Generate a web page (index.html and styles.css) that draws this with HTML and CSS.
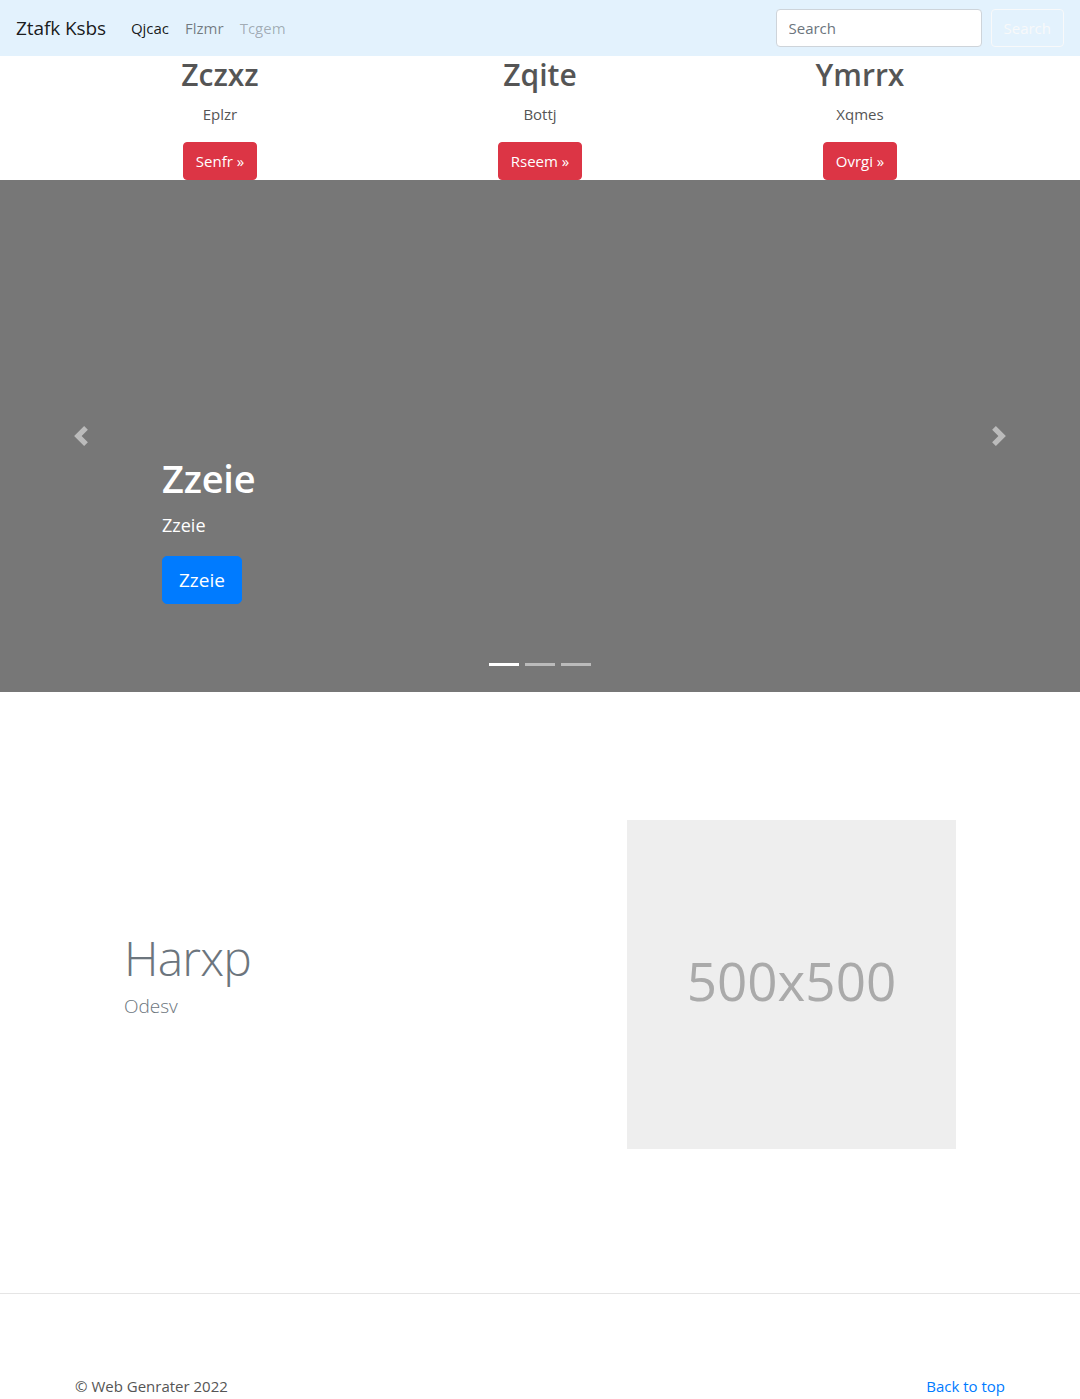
FILE: index.html
```html
<!DOCTYPE html>
<html lang="en">
<head>
<meta charset="utf-8">
<title>Ztafk Ksbs</title>
<link rel="stylesheet" href="styles.css">
</head>
<body>
<nav class="navbar">
  <a class="brand" href="#">Ztafk Ksbs</a>
  <ul class="nav">
    <li><a class="nav-link active" href="#">Qjcac</a></li>
    <li><a class="nav-link" href="#">Flzmr</a></li>
    <li><a class="nav-link disabled" href="#">Tcgem</a></li>
  </ul>
  <form class="search">
    <input class="search-input" type="text" placeholder="Search">
    <button class="search-btn" type="button">Search</button>
  </form>
</nav>

<section class="features">
  <div class="feature">
    <h2 class="feature-title">Zczxz</h2>
    <p class="feature-text">Eplzr</p>
    <a class="btn-danger" href="#">Senfr &raquo;</a>
  </div>
  <div class="feature">
    <h2 class="feature-title">Zqite</h2>
    <p class="feature-text">Bottj</p>
    <a class="btn-danger" href="#">Rseem &raquo;</a>
  </div>
  <div class="feature">
    <h2 class="feature-title">Ymrrx</h2>
    <p class="feature-text">Xqmes</p>
    <a class="btn-danger" href="#">Ovrgi &raquo;</a>
  </div>
</section>

<div class="carousel">
  <a class="carousel-control prev" href="#">
    <svg class="control-icon" viewBox="0 0 8 8" width="20" height="20"><path d="M5.25 0l-4 4 4 4 1.5-1.5L4.25 4l2.5-2.5L5.25 0z" fill="#fff"/></svg>
  </a>
  <a class="carousel-control next" href="#">
    <svg class="control-icon" viewBox="0 0 8 8" width="20" height="20"><path d="M2.75 0l-1.5 1.5L3.75 4l-2.5 2.5L2.75 8l4-4-4-4z" fill="#fff"/></svg>
  </a>
  <div class="carousel-caption">
    <h1 class="caption-title">Zzeie</h1>
    <p class="caption-lead">Zzeie</p>
    <p class="caption-action"><a class="btn-primary-lg" href="#">Zzeie</a></p>
  </div>
  <ol class="indicators">
    <li class="indicator active"></li>
    <li class="indicator"></li>
    <li class="indicator"></li>
  </ol>
</div>

<section class="featurette">
  <div class="featurette-text">
    <h2 class="featurette-heading">Harxp</h2>
    <p class="featurette-lead">Odesv</p>
  </div>
  <svg class="placeholder" width="329" height="329" viewBox="0 0 329 329">
    <rect width="329" height="329" fill="#eee"/>
    <text x="50%" y="50%" dy="0.31em" text-anchor="middle" fill="#aaa" class="placeholder-text">500x500</text>
  </svg>
</section>

<hr class="divider">

<footer class="footer">
  <p class="copy">&copy; Web Genrater 2022</p>
  <a class="back-top" href="#">Back to top</a>
</footer>
</body>
</html>
```

FILE: styles.css
```css
* { box-sizing: border-box; }

body {
  margin: 0;
  font-family: "Open Sans", "Noto Sans", sans-serif;
  font-size: 16px;
  line-height: 1.5;
  color: #555;
  background: #fff;
}

a { text-decoration: none; }

/* Navbar */
.navbar {
  display: flex;
  align-items: center;
  height: 56px;
  padding: 0 16px;
  background: #e3f2fd;
}

.brand {
  font-size: 19px;
  line-height: 30px;
  color: rgba(0, 0, 0, 0.9);
  margin-right: 17px;
  letter-spacing: -0.1px;
}

.nav {
  display: flex;
  list-style: none;
  margin: 0;
  padding: 0;
  flex: 1;
}

.nav-link {
  display: block;
  padding: 8px 8px;
  font-size: 15px;
  color: rgba(0, 0, 0, 0.5);
}

.nav-link.active { color: rgba(0, 0, 0, 0.9); }
.nav-link.disabled { color: rgba(0, 0, 0, 0.3); }

.search {
  display: flex;
  align-items: center;
}

.search-input {
  width: 206px;
  height: 38px;
  padding: 6px 12px;
  font-family: inherit;
  font-size: 15px;
  color: #495057;
  background: #fff;
  border: 1px solid #ced4da;
  border-radius: 4px;
  margin-right: 9px;
}

.search-input::placeholder { color: #6c757d; }

.search-btn {
  height: 38px;
  padding: 6px 12px;
  font-family: inherit;
  font-size: 15px;
  color: #f8f9fa;
  background: transparent;
  border: 1px solid #f8f9fa;
  border-radius: 4px;
}

/* Features */
.features {
  width: 960px;
  margin: 0 auto;
  display: grid;
  grid-template-columns: repeat(3, 1fr);
}

.feature {
  text-align: center;
  padding: 0 15px;
}

.feature-title {
  margin: 0 0 8px;
  font-size: 30px;
  font-weight: 600;
  line-height: 38.4px;
  color: #555;
}

.feature-text {
  margin: 0 0 16px;
  font-size: 15px;
  line-height: 24px;
}

.btn-danger {
  display: inline-block;
  height: 38px;
  padding: 6px 12px;
  font-size: 15px;
  line-height: 24px;
  color: #fff;
  background: #dc3545;
  border: 1px solid #dc3545;
  border-radius: 4px;
  vertical-align: top;
}

/* Carousel */
.carousel {
  position: relative;
  height: 512px;
  background: #777;
}

.carousel-control {
  position: absolute;
  top: 0;
  bottom: 0;
  width: 15%;
  display: flex;
  align-items: center;
  justify-content: center;
  opacity: 0.5;
}

.carousel-control.prev { left: 0; }
.carousel-control.next { right: 0; }

.control-icon { display: block; }

.carousel-caption {
  position: absolute;
  left: 15%;
  right: 15%;
  bottom: 68px;
  padding: 20px 0;
  color: #fff;
  text-align: left;
}

.caption-title {
  margin: 0 0 8px;
  font-size: 38px;
  font-weight: 600;
  line-height: 48px;
  letter-spacing: -0.2px;
}

.caption-lead {
  margin: 0 0 16px;
  font-size: 18px;
  line-height: 30px;
}

.caption-action { margin: 0; }

.btn-primary-lg {
  display: inline-block;
  height: 48px;
  padding: 8px 16px;
  font-size: 19px;
  line-height: 30px;
  color: #fff;
  background: #007bff;
  border: 1px solid #007bff;
  border-radius: 5px;
}

.indicators {
  position: absolute;
  left: 0;
  right: 0;
  bottom: 26px;
  display: flex;
  justify-content: center;
  gap: 6px;
  list-style: none;
  margin: 0;
  padding: 0;
}

.indicator {
  width: 30px;
  height: 3px;
  background: #fff;
  opacity: 0.5;
}

.indicator.active { opacity: 1; }

/* Featurette */
.featurette {
  display: flex;
  align-items: flex-start;
  padding: 128px 0 144px;
}

.featurette-text {
  width: 627px;
  padding-left: 124px;
}

.featurette-heading {
  margin: 113px 0 8px;
  font-size: 48px;
  font-weight: 300;
  line-height: 50px;
  letter-spacing: -0.8px;
  color: #6c757d;
}

.featurette-lead {
  margin: 0;
  font-size: 19px;
  font-weight: 300;
  line-height: 30px;
  color: #6c757d;
}

.placeholder { display: block; }

.placeholder-text {
  font-family: "Open Sans", "Noto Sans", sans-serif;
  font-size: 53px;
}

/* Divider + footer */
.divider {
  margin: 0;
  border: 0;
  border-top: 1px solid rgba(0, 0, 0, 0.1);
}

.footer {
  width: 960px;
  margin: 0 auto;
  padding: 80px 15px 0;
  display: flex;
  justify-content: space-between;
  font-size: 15px;
  line-height: 24px;
}

.copy { margin: 0 0 16px; color: #555; }

.back-top { color: #007bff; }
```
